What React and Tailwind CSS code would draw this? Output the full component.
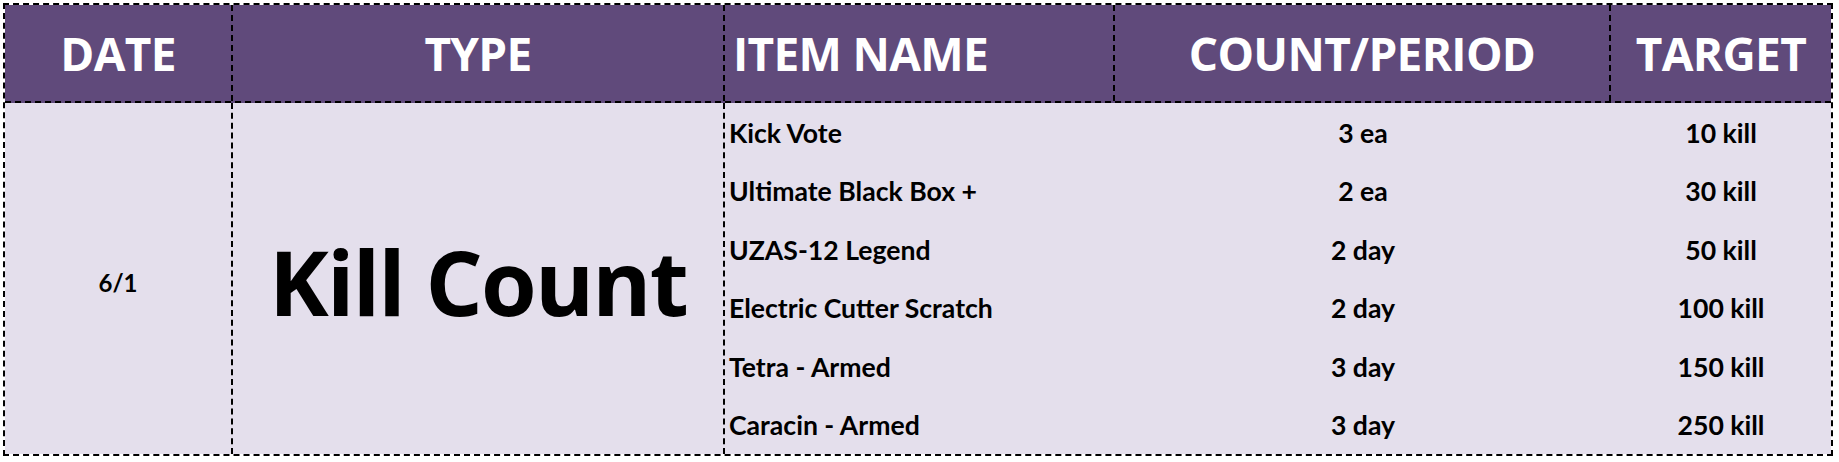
import React from "react";

const rows = [
  ["Kick Vote", "3 ea", "10 kill"],
  ["Ultimate Black Box +", "2 ea", "30 kill"],
  ["UZAS-12 Legend", "2 day", "50 kill"],
  ["Electric Cutter Scratch", "2 day", "100 kill"],
  ["Tetra - Armed", "3 day", "150 kill"],
  ["Caracin - Armed", "3 day", "250 kill"],
];

const head = "font-['Open_Sans',sans-serif] font-bold text-white text-[46px] tracking-[-0.015em] leading-none";
const body = "font-['Lato',sans-serif] font-bold text-black text-[26.6px] leading-none";

export default function App() {
  return (
    <div className="w-[1839px] h-[462px] bg-white pt-[3px] pl-[3px]">
      <div className="w-[1830px] border-2 border-dashed border-black">
        <div className="flex h-[98px] bg-[#604a7b] border-b-2 border-dashed border-black">
          <div className={`w-[228px] border-r-2 border-dashed border-black flex items-center justify-center ${head}`}>DATE</div>
          <div className={`w-[492px] border-r-2 border-dashed border-black flex items-center justify-center ${head}`}>TYPE</div>
          <div className={`w-[390px] border-r-2 border-dashed border-black flex items-center pl-[8px] ${head}`}>ITEM NAME</div>
          <div className={`w-[496px] border-r-2 border-dashed border-black flex items-center justify-center ${head}`}>COUNT/PERIOD</div>
          <div className={`w-[220px] flex items-center justify-center ${head}`}>TARGET</div>
        </div>
        <div className="flex h-[351px] bg-[#e4dfec]">
          <div className="w-[228px] border-r-2 border-dashed border-black flex items-center justify-center pt-[8px] font-['Lato',sans-serif] font-bold text-[24px] text-black">6/1</div>
          <div className="w-[492px] border-r-2 border-dashed border-black flex items-center justify-center pt-[4px] font-['Open_Sans',sans-serif] font-bold text-[90px] tracking-[-0.02em] text-black leading-none">Kill Count</div>
          <div className="flex flex-col w-[1106px]">
            {rows.map(([name, count, target]) => (
              <div key={name} className={`flex-1 flex items-end pb-[15px] ${body}`}>
                <div className="w-[390px] pl-[4px]">{name}</div>
                <div className="w-[496px] text-center">{count}</div>
                <div className="w-[220px] text-center">{target}</div>
              </div>
            ))}
          </div>
        </div>
      </div>
    </div>
  );
}
